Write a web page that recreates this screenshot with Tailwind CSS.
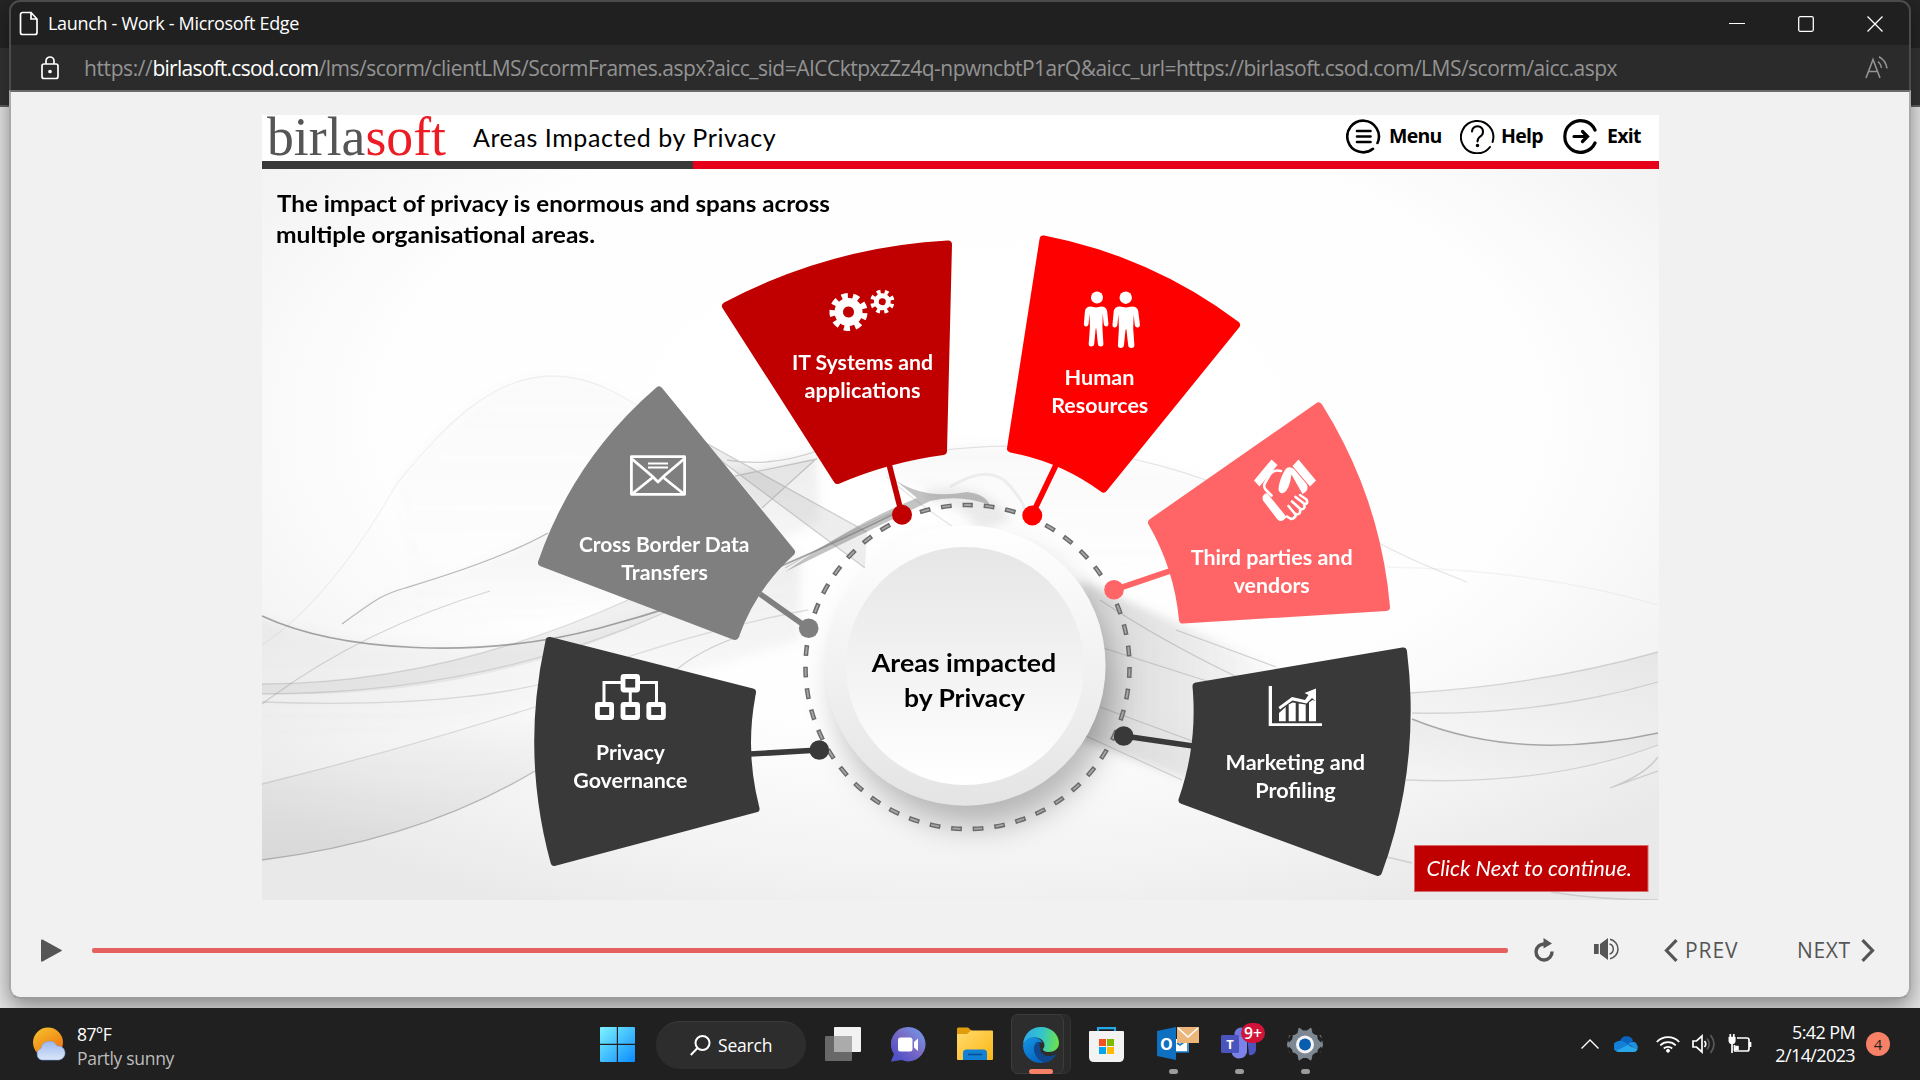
<!DOCTYPE html>
<html lang="en">
<head>
<meta charset="utf-8">
<title>Launch - Work - Microsoft Edge</title>
<script src="https://cdn.jsdelivr.net/npm/@tailwindcss/browser@4"></script>
</head>
<body class="w-[1920px] h-[1080px] overflow-hidden bg-[#e2e2e2] font-['Open_Sans',sans-serif]">
<div class="relative w-[1920px] h-[1080px] overflow-hidden">

  <!-- window behind -->
  <div class="absolute inset-0 flex flex-col">
    <div class="h-12 bg-[#242424]"></div>
    <div class="h-[57px] bg-[#333333]"></div>
    <div class="h-[2px] bg-[#5f5f5f]"></div>
    <div class="grow bg-[#e6e6e6]"></div>
  </div>

  <div class="relative flex flex-col h-[1080px]">
    <!-- popup window -->
    <main class="mx-[9px] h-[999px] flex flex-col rounded-[11px] shadow-[0_8px_22px_rgba(0,0,0,0.42)]">
      <header class="border-x-2 border-t-2 border-[#4b4b4b] rounded-t-[11px] bg-[#202020] overflow-hidden">
        <div class="h-[43px] flex items-center pl-[8px]">
          <svg class="w-[20px] h-[25px]" viewBox="0 0 20 25" fill="none" stroke="#fff" stroke-width="1.7"><path d="M3 1.5h9l6 6.5v13.500a2 2 0 0 1-2 2H3.500a2 2 0 0 1-2-2V3.500a2 2 0 0 1 2-2zM12 1.500V8h6"/></svg>
          <span class="ml-[9px] text-[18px] text-white tracking-[-0.32px] whitespace-nowrap">Launch - Work - Microsoft Edge</span>
          <div class="ml-auto mr-[26px] flex items-center gap-[53px]">
            <svg class="w-4 h-4" viewBox="0 0 16 16" stroke="#fff" stroke-width="1.2"><path d="M0 7.500h16"/></svg>
            <svg class="w-4 h-4" viewBox="0 0 16 16" stroke="#fff" stroke-width="1.3" fill="none"><rect x=".7" y=".7" width="14.600" height="14.600" rx="1.500"/></svg>
            <svg class="w-4 h-4" viewBox="0 0 16 16" stroke="#fff" stroke-width="1.300"><path d="M.5.5l15 15M15.500.5l-15 15"/></svg>
          </div>
        </div>
        <div class="h-[45px] bg-[#2b2b2b] flex items-center pl-[30px]">
          <svg class="w-[18px] h-[24px]" viewBox="0 0 18 24" fill="none" stroke="#fff" stroke-width="1.700"><rect x="1" y="8" width="16" height="14.500" rx="2"/><path d="M5 8V5a4 4 0 0 1 8 0v3"/><circle cx="9" cy="15.500" r="1" fill="#fff"/></svg>
          <div class="ml-[25px] flex text-[21px] text-[#939393] whitespace-nowrap leading-[26px]"><span class="tracking-[-0.4px]">https://</span><span class="text-white tracking-[-0.75px]">birlasoft.csod.com</span><span class="tracking-[-0.51px]">/lms/scorm/clientLMS/ScormFrames.aspx?aicc_sid=AICCktpxzZz4q-npwncbtP1arQ&amp;aicc_url=https://birlasoft.csod.com/LMS/scorm/aicc.aspx</span></div>
          <svg class="ml-auto mr-[21px] w-[23px] h-[23px]" viewBox="0 0 23 23" fill="none" stroke="#939393" stroke-width="1.600"><path d="M1 22L8 3.500 15 22M3.500 15.500h9M13 5.500q3 2.500 3.500 6.500M14 .8q7 4 8 11.500"/></svg>
        </div>
      </header>
      <section class="grow border-x-2 border-b-2 border-t-2 border-x-[#a9a9a9] border-b-[#9c9c9c] border-t-[#6b6b6b] rounded-b-[11px] bg-[#f1f1f1] flex flex-col pt-[23px] relative">
        <!-- slide -->
        <article class="ml-[251px] w-[1397px] h-[785px] bg-white flex flex-col">
          <div class="h-[46px] flex items-center">
            <svg class="w-[200px] h-[46px] overflow-visible" viewBox="262 115 200 46"><text x="267" y="155" font-family="Liberation Serif, serif" font-size="54" fill="#555" textLength="179" lengthAdjust="spacingAndGlyphs">birla<tspan fill="#ed1c24">soft</tspan></text></svg>
            <span class="ml-[11px] font-['Lato',sans-serif] text-[25px] text-black whitespace-nowrap tracking-[0.58px]">Areas Impacted by Privacy</span>
            <nav class="ml-auto pr-[17px] pb-[4px] flex items-center text-[19.5px] font-bold text-black leading-none tracking-[-0.7px]">
              <svg class="w-[35px] h-[35px]" viewBox="0 0 35 35" fill="none" stroke="#000" stroke-width="2.600" stroke-linecap="round"><path d="M31.500 24A15.800 15.800 0 1 0 27 29.800"/><path d="M11 12h13.500M11 17.500h13.500M11 23h13.500"/></svg>
              <span class="ml-[8px] w-[55px]">Menu</span>
              <svg class="ml-[16px] w-[35px] h-[35px]" viewBox="0 0 35 35" fill="none" stroke="#000" stroke-width="2" stroke-linecap="round"><path d="M32.600 23A16.200 16.200 0 1 0 30 28"/><path d="M12 12.500a5.500 5.500 0 1 1 8.500 4.800Q17.500 19.500 17.500 22.500"/><circle cx="17.500" cy="26.500" r=".8" fill="#000"/></svg>
              <span class="ml-[6px] w-[44px]">Help</span>
              <svg class="ml-[18px] w-[35px] h-[35px]" viewBox="0 0 35 35" fill="none" stroke="#000" stroke-width="3.200" stroke-linecap="round"><path d="M32 11A15.800 15.800 0 1 0 32 24"/><path d="M11 17.500h13.500M19.500 12.500l5 5-5 5"/></svg>
              <span class="ml-[9px] w-[35px]">Exit</span>
            </nav>
          </div>
          <div class="flex h-2"><div class="w-[431px] bg-[#393939]"></div><div class="grow bg-[#e60019]"></div></div>

          <svg class="w-[1397px] h-[731px] block" viewBox="262 169 1397 731" font-family="Lato, sans-serif">
            <defs>
              <radialGradient id="page" gradientUnits="userSpaceOnUse" cx="960" cy="420" r="1000" gradientTransform="translate(960 420) scale(1 .54) translate(-960 -420)">
                <stop offset="0" stop-color="#fff"/><stop offset=".58" stop-color="#fefefe"/><stop offset=".87" stop-color="#f1f1f1"/><stop offset="1.000" stop-color="#e9e9e9"/>
              </radialGradient>
              <linearGradient id="rim" x1="0" y1="0" x2="0" y2="1"><stop offset="0" stop-color="#fff"/><stop offset="1" stop-color="#e4e4e4"/></linearGradient>
              <linearGradient id="face" x1="0" y1="0" x2="0" y2="1"><stop offset="0" stop-color="#e6e6e6"/><stop offset="1" stop-color="#fff"/></linearGradient>
              <linearGradient id="fadeDown" x1="0" y1="0" x2="0" y2="1"><stop offset="0" stop-color="#888" stop-opacity=".15"/><stop offset="1" stop-color="#888" stop-opacity="0"/></linearGradient>
              <linearGradient id="fadeUp" x1="0" y1="1" x2="0" y2="0"><stop offset="0" stop-color="#888" stop-opacity=".22"/><stop offset="1" stop-color="#888" stop-opacity="0"/></linearGradient>
              <linearGradient id="fadeRight" x1="0" y1="0" x2="1" y2="0"><stop offset="0" stop-color="#777" stop-opacity=".3"/><stop offset="1" stop-color="#777" stop-opacity="0.03"/></linearGradient>
              <filter id="soft" x="-30%" y="-30%" width="160%" height="160%"><feGaussianBlur stdDeviation="16"/></filter>
              <filter id="silk" x="-10%" y="-10%" width="120%" height="120%"><feGaussianBlur stdDeviation="5"/></filter>
            </defs>
            <rect x="262" y="169" width="1397" height="731" fill="url(#page)"/>

            <!-- silk waves -->
            <g stroke="none" filter="url(#silk)">
              <path fill="url(#fadeDown)" opacity=".25" d="M396 485C440 430 490 376 552 376S650 420 722 460L700 560 420 620Z"/>
              <path fill="url(#fadeDown)" d="M342 624C380 596 385 594 405 588S500 560 548 533S680 480 816 453L820 520Q600 640 342 624Z"/>
              <path fill="url(#fadeDown)" opacity=".35" d="M820 455Q1000 425 1206 480L1180 570 1060 560 960 500Z"/>
              <path fill="url(#fadeDown)" d="M240 610C340 652 480 660 600 628S800 560 800 550V640Q560 720 240 740Z"/>
              <path fill="url(#fadeRight)" d="M1080 580L1276 667 1190 780 1080 740Z"/>
              <path fill="#888" fill-opacity=".16" d="M925 490Q990 480 1010 520L980 530Q960 505 925 500Z"/>
            </g>
            <g stroke="none">
              <path fill="url(#fadeUp)" opacity=".75" d="M262 784Q400 750 535 707L535 771Q420 840 262 860Z"/>
              <path fill="#888" fill-opacity=".12" d="M262 684Q440 684 628 600L664 613Q480 700 262 694Z"/>
              <path fill="#777" fill-opacity=".12" d="M706 443L867 532 865 568 720 460Z"/>
              <path fill="#777" fill-opacity=".08" d="M735 476L817 459 762 508Z"/>
              <path fill="url(#fadeDown)" opacity=".8" d="M1410 693Q1540 685 1658 652V733Q1520 763 1412 719Z"/>
              <path fill="url(#fadeDown)" opacity=".7" d="M1412 719Q1520 763 1658 733V745Q1550 786 1406 780Z"/>
              <path fill="#555" fill-opacity=".35" d="M895 480Q925 500 967 492Q985 494 990 505Q960 494 930 501Q860 535 785 572Q850 525 917 498Z"/>
            </g>
            <g fill="none" stroke="#777" stroke-width="1.300">
              <path stroke-opacity=".65" stroke-width="1.700" d="M262 616C340 652 480 660 600 628S800 560 900 511"/>
              <path stroke-opacity=".5" d="M342 624C380 596 385 594 405 588S500 560 548 533"/>
              <path stroke-opacity=".22" d="M262 684Q440 684 628 600M262 694Q480 694 664 613M262 702Q480 710 590 670T808 610"/>
              <path stroke-opacity=".28" d="M262 704Q360 630 490 591"/>
              <path stroke-opacity=".09" d="M262 645Q330 600 396 485C440 430 490 376 552 376S650 420 722 460"/>
              <path stroke-opacity=".22" d="M262 784Q400 750 535 707"/>
              <path stroke-opacity=".45" d="M262 860Q420 840 535 771"/>
              <path stroke-opacity=".32" d="M706 443L867 532M720 460L865 568M817 458L762 508M727 460Q770 468 820 450M735 476L817 459M785 568Q850 530 903 508M676 670Q700 650 740 636"/>
              <path stroke-opacity=".18" d="M930 452Q1070 432 1206 480M887 477Q960 540 1080 600"/>
              <path stroke-opacity=".1" stroke-width="3" d="M950 487Q990 462 1010 486T1022 512"/>
              <path stroke-opacity=".3" d="M1176 630L1276 667M1100 647L1210 682M1100 600Q1160 640 1235 676M1100 707L1195 742M1086 736L1182 780"/>
              <path stroke-opacity=".18" d="M1379 543Q1410 560 1467 582"/>
              <path stroke-opacity=".07" d="M1387 567Q1540 570 1658 605"/>
              <path stroke-opacity=".25" d="M1410 693Q1540 685 1658 652M1412 713Q1540 716 1658 682M1406 780Q1550 786 1658 745M1387 857L1412 863M1551 892Q1600 900 1658 900"/>
              <path stroke-opacity=".6" stroke-width="1.500" d="M1412 719Q1520 763 1658 733"/>
              <path stroke-opacity=".3" d="M1658 757Q1645 775 1610 788L1658 771"/>
            </g>

            <!-- hub -->
            <circle cx="975" cy="688" r="138" fill="#000" fill-opacity=".27" filter="url(#soft)"/>
            <circle cx="965.300" cy="665.500" r="140.300" fill="url(#rim)"/>
            <circle cx="965" cy="666" r="119" fill="url(#face)"/>
            <g fill="none" transform="rotate(-90 967.5 667)">
              <circle cx="967.500" cy="667" r="162" stroke="#6a6a6a" stroke-width="4.600" stroke-dasharray="10.8 10.857" stroke-dashoffset="5.400"/>
              <circle cx="967.500" cy="667" r="162" stroke="#a6a6a6" stroke-width="1.800" stroke-dasharray="8 13.657" stroke-dashoffset="4"/>
            </g>

            <!-- wedges and connectors -->
            <g stroke-width="8" stroke-linejoin="round">
              <path fill="#c00000" stroke="#c00000" d="M726 306A540 540 0 0 1 948 244.500L943 451A400 400 0 0 0 837.500 480Z"/>
              <path fill="#7f7f7f" stroke="#7f7f7f" d="M542 562.500A400 400 0 0 1 659 390.500L791 552A205 205 0 0 0 735 636Z"/>
              <path fill="#393939" stroke="#393939" d="M554.500 862A460 460 0 0 1 549.500 641L752 692.500A260 260 0 0 0 755.500 808.500Z"/>
              <path fill="#f00" stroke="#f00" d="M1043.500 239.500A470 470 0 0 1 1236 325L1103.500 488.500A225 225 0 0 0 1011 448.500Z"/>
              <path fill="#ff6566" stroke="#ff6566" d="M1318.500 406.500A450 450 0 0 1 1386 607L1183 619.500A240 240 0 0 0 1152 522.500Z"/>
              <path fill="#393939" stroke="#393939" d="M1403 651.500A475 475 0 0 1 1378 872L1182.500 800A270 270 0 0 0 1196.500 686.500Z"/>
            </g>
            <g stroke-width="5.600">
              <path stroke="#c00000" d="M889 464L902 515"/><circle cx="902" cy="514.700" r="10" fill="#c00000" stroke="none"/>
              <path stroke="#7f7f7f" d="M760 594L808 628"/><circle cx="808.700" cy="628.300" r="9.800" fill="#7f7f7f" stroke="none"/>
              <path stroke="#393939" d="M750 754L819 750"/><circle cx="819.300" cy="750" r="9.800" fill="#393939" stroke="none"/>
              <path stroke="#f00" d="M1056 465L1032 515"/><circle cx="1032.300" cy="515.500" r="10" fill="#f00" stroke="none"/>
              <path stroke="#ff6566" d="M1170 571L1114 590"/><circle cx="1114" cy="589.700" r="9.800" fill="#ff6566" stroke="none"/>
              <path stroke="#393939" d="M1193 746L1124 736"/><circle cx="1123.700" cy="736" r="9.800" fill="#393939" stroke="none"/>
            </g>

            <!-- gears -->
            <g fill="none" stroke="#fff">
              <g transform="rotate(4 848.5 312)"><circle cx="848.500" cy="312" r="9.800" stroke-width="8.500"/><circle cx="848.500" cy="312" r="15.800" stroke-width="6.500" stroke-dasharray="6 5.030"/></g>
              <g transform="rotate(12 882.3 301.7)"><circle cx="882.300" cy="301.700" r="6" stroke-width="5"/><circle cx="882.300" cy="301.700" r="9.800" stroke-width="4.600" stroke-dasharray="3.700 3.997"/></g>
            </g>
            <!-- envelope -->
            <g fill="none" stroke="#fff" stroke-width="2.800" stroke-linejoin="round"><rect x="631.400" y="456.700" width="53.200" height="37.600"/><path d="M632 459l20 17 6 6 6-6 20-17M632 494l20-16M684 494l-20-16"/><path stroke-width="2" d="M648 463.500h20M648 467.500h20"/></g>
            <!-- people -->
            <g fill="#fff">
              <circle cx="1097" cy="297.500" r="6"/><circle cx="1125.700" cy="297.700" r="6.200"/>
              <path d="M1091 306.500l5 1 5-1q5.500 0 6.200 5l1.200 12q0 3-2 3-2.400 0-2.700-3l-1-10-.3 14 1 16.500q0 2.500-2.700 2.500-2.600 0-2.800-2.500l-1.600-15.500h-.6l-1.500 15.500q-.3 2.500-2.900 2.500t-2.600-2.500l1.200-16.500-.3-14-1 10q-.3 3-2.600 3-2.200 0-2.100-3l1-12q.6-5 6.100-5z"/>
              <path transform="translate(0 -2)" d="M1120 308.500l6 1 6-1q5.600 0 6.300 5l1.600 13q0 3-2.300 3-2.500 0-2.900-3l-1-10-.5 14 1.200 16.800q0 2.700-3 2.700t-3.200-2.700l-1.800-15.800h-.8l-1.700 15.800q-.3 2.700-3.200 2.700t-2.800-2.700l1-16.800-.5-14-1 10q-.4 3-2.700 3-2.400 0-2.200-3l1.200-13q.7-5 6.300-5z"/>
            </g>
            <!-- handshake -->
            <g fill="#fff">
              <path d="M1271.500 459.500l6 5.500-18 21.500-5.500-6zM1298.500 459.500l17.500 21-6 6-17.500-20.500z"/>
              <path d="M1267 493l19.500 24q-5 6.500-9 2.500l-14.500-19q-2-5.500 4-7.500z"/>
              <path d="M1286 468.500q4-2.500 8 .5l13 15.500q2.500 6-4.500 9.500l-11-19.500q-2 15.500-8 18.500-4.500 1-5-4 1-11 7.500-20.500z"/>
              <path d="M1281 471q-8-2-12 5l-4.500 8q-1 3 1 5.500l6 6M1300 495l6.500 4.500q2 4.500-2 4.500l-9-7M1304 504q2 5-3 5.500l-9-8M1300 509.500q1 5.500-4.500 5l-7-8.500M1296 514q-.5 4.500-5 5l-4-2.500" fill="none" stroke="#fff" stroke-width="2.600" stroke-linecap="round" stroke-linejoin="round"/>
            </g>
            <!-- org chart -->
            <g fill="none" stroke="#fff"><g stroke-width="4.800"><rect x="623" y="676.500" width="14.600" height="13.500" rx="1"/><rect x="597.400" y="704.500" width="14.200" height="13" rx="1"/><rect x="623" y="704.500" width="14.600" height="13" rx="1"/><rect x="648.800" y="704.500" width="14.600" height="13" rx="1"/></g><path stroke-width="3" d="M622 682.500h-18V703M638.500 682.500H656.500V703M630.300 692V703"/></g>
            <!-- bar chart -->
            <g fill="#fff"><path d="M1268.700 686h3.300v37.300h50v2.700h-53.300z"/><path d="M1279 713l6.700-6v14.300H1279zM1288.700 704.500l4-2 3 .5v18.300h-7zM1298.700 703.500l7 1v16.800h-7zM1309 702.500l3.500-2.500 3.500 1v20.300h-7z"/><path d="M1316 688.500v13l-4-3.500-5.500 5.500-14-3-12.500 9-1.500-2.500L1292 697l13 3 3.500-5-4-2z"/></g>

            <!-- labels -->
            <g fill="#fff" font-size="21" font-weight="700" text-anchor="middle">
              <text x="862.500" y="370" textLength="141" lengthAdjust="spacingAndGlyphs">IT Systems and</text><text x="862.500" y="398" textLength="116" lengthAdjust="spacingAndGlyphs">applications</text>
              <text x="664.200" y="551.700" textLength="170.500" lengthAdjust="spacingAndGlyphs">Cross Border Data</text><text x="664.500" y="579.700" textLength="86.500" lengthAdjust="spacingAndGlyphs">Transfers</text>
              <text x="630.500" y="760" textLength="69" lengthAdjust="spacingAndGlyphs">Privacy</text><text x="630.300" y="788" textLength="114" lengthAdjust="spacingAndGlyphs">Governance</text>
              <text x="1099.500" y="384.700" textLength="70" lengthAdjust="spacingAndGlyphs">Human</text><text x="1099.800" y="412.700" textLength="97" lengthAdjust="spacingAndGlyphs">Resources</text>
              <text x="1271.700" y="564.700" textLength="162" lengthAdjust="spacingAndGlyphs">Third parties and</text><text x="1271.700" y="592.700" textLength="76" lengthAdjust="spacingAndGlyphs">vendors</text>
              <text x="1295.300" y="770" textLength="139.500" lengthAdjust="spacingAndGlyphs">Marketing and</text><text x="1295.500" y="798" textLength="80.500" lengthAdjust="spacingAndGlyphs">Profiling</text>
            </g>
            <g fill="#000" font-size="25" font-weight="700" text-anchor="middle"><text x="964" y="671.700" textLength="184.500" lengthAdjust="spacingAndGlyphs">Areas impacted</text><text x="964.500" y="706.700" textLength="121" lengthAdjust="spacingAndGlyphs">by Privacy</text></g>
            <g fill="#000" font-size="23" font-weight="700"><text x="277" y="211.700" textLength="553" lengthAdjust="spacingAndGlyphs">The impact of privacy is enormous and spans across</text><text x="276" y="242.500" textLength="319" lengthAdjust="spacingAndGlyphs">multiple organisational areas.</text></g>
            <rect x="1414.500" y="845.500" width="233.500" height="46" fill="#c00000" stroke="#d86a6a"/>
            <text x="1426.500" y="875.700" fill="#fff" font-size="21.500" font-style="italic" textLength="205.500" lengthAdjust="spacingAndGlyphs">Click Next to continue.</text>
          </svg>
        </article>

        <!-- player controls -->
        <div class="grow flex items-center pt-[3px] pl-[30px] pr-[34px] text-[#555]">
          <svg class="w-[21px] h-[23px]" viewBox="0 0 21 23" fill="#555"><path d="M0 1.500Q0 0 1.500.5L20.500 11q.8.5 0 1L1.500 22.500Q0 23 0 21.500z"/></svg>
          <div class="ml-[30px] w-[1416px] h-[5px] rounded-[2px] bg-[#e55f5f]"></div>
          <svg class="ml-[26px] w-[20px] h-[24px]" viewBox="0 0 20 24"><path d="M10.500 6A8 8 0 1 0 18 13.500" fill="none" stroke="#555" stroke-width="3.400"/><path d="M9.500 0l8.500 5.500-8.500 5z" fill="#555"/></svg>
          <svg class="ml-[40px] -mt-[2px] w-[25px] h-[22px]" viewBox="0 0 25 22" fill="#555"><path d="M0 6h4.700v10H0zM6 6l8-6v22l-8-6z"/><path d="M15.500 6a5.200 5.200 0 0 1 0 10M16 1.200a10 10 0 0 1 0 19.600" fill="none" stroke="#555" stroke-width="1.500"/></svg>
          <svg class="ml-[45px] w-[14px] h-[23px]" viewBox="0 0 14 23" fill="none" stroke="#555" stroke-width="3.200"><path d="M12.500 1.200L2.500 11.500l10 10.300"/></svg>
          <span class="ml-[7px] w-[55px] text-[21px] font-medium leading-none tracking-[0.9px]">PREV</span>
          <span class="ml-auto w-[55px] text-[21px] font-medium leading-none tracking-[0.6px]">NEXT</span>
          <svg class="ml-[9px] w-[14px] h-[23px]" viewBox="0 0 14 23" fill="none" stroke="#555" stroke-width="3.200"><path d="M1.500 1.200l10 10.300-10 10.300"/></svg>
        </div>
      </section>
    </main>

    <!-- taskbar -->
    <footer class="mt-[9px] h-[72px] bg-[#202020] flex items-center relative text-white">
      <svg class="ml-[32px] w-[35px] h-[34px]" viewBox="0 0 35 34"><defs><linearGradient id="sun" x1=".2" y1="0" x2=".8" y2="1"><stop stop-color="#f4bf2d"/><stop offset="1" stop-color="#f06a0a"/></linearGradient><linearGradient id="cloud" x1="0" y1="0" x2="0" y2="1"><stop stop-color="#9db9ee"/><stop offset="1" stop-color="#dbe7fa"/></linearGradient></defs><circle cx="16" cy="15.500" r="15" fill="url(#sun)"/><path d="M10 33a6 6 0 0 1-1-11.500 8.500 8.500 0 0 1 16-2.500A7 7 0 1 1 27 33z" fill="url(#cloud)" stroke="#7d9fe0" stroke-width=".6"/></svg>
      <div class="ml-[10px] pt-[3px] w-[120px] text-[17.5px] leading-[24px] tracking-[-0.6px] whitespace-nowrap"><div>87°F</div><div class="text-[#bdbdbd] tracking-[-0.3px]">Partly sunny</div></div>

      <div class="ml-[403px] flex items-center">
        <svg class="w-[35px] h-[35px]" viewBox="0 0 35 35"><defs><linearGradient id="win" x1="0" y1="0" x2="1" y2="1"><stop stop-color="#7df3ff"/><stop offset="1" stop-color="#0a8cff"/></linearGradient></defs><path fill="url(#win)" d="M1 0h15.800v16.800H0V1q0-1 1-1zM18 0h16q1 0 1 1v15.800H18zM0 18h16.800v17H1q-1 0-1-1zM18 18h17v16q0 1-1 1H18z"/></svg>
        <div class="ml-[21px] mt-[2px] w-[150px] h-[48px] rounded-full bg-[#2d2d2d] border-t border-[#3a3a3a] flex items-center pl-[34px]">
          <svg class="w-[21px] h-[21px]" viewBox="0 0 21 21" fill="none" stroke="#fff" stroke-width="2"><circle cx="12.500" cy="8" r="7"/><path d="M7.500 13L.8 20"/></svg>
          <span class="ml-[7px] text-[17.5px] tracking-[-0.2px]">Search</span>
        </div>
        <svg class="ml-[19px] w-[36px] h-[34px]" viewBox="0 0 36 34"><rect x="9" width="27" height="25" rx="1" fill="#f2f2f2"/><rect y="9" width="27" height="25" rx="1" fill="#686868"/><path d="M9 9h18v16H9z" fill="#ababab"/></svg>
        <svg class="ml-[30px] w-[35px] h-[35px]" viewBox="0 0 35 35"><defs><linearGradient id="chat" x1="1" y1=".1" x2=".2" y2=".9"><stop stop-color="#6f9bee"/><stop offset=".5" stop-color="#7b6cc4"/><stop offset="1" stop-color="#5252c8"/></linearGradient></defs><path fill="url(#chat)" d="M17.500 0a17.200 17.200 0 1 1-7 33L1 34.500q-1 0-.7-1L3 27A17.200 17.200 0 0 1 17.500 0z"/><rect x="7" y="10.500" width="14.500" height="14" rx="2.500" fill="#fff"/><path d="M23 15l4-3.500V24l-4-3.500z" fill="#fff"/></svg>
        <svg class="ml-[31px] w-[36px] h-[34px]" viewBox="0 0 36 34"><defs><linearGradient id="fold" x1="0" y1="0" x2="1" y2="1"><stop stop-color="#ffdb6e"/><stop offset="1" stop-color="#fcb614"/></linearGradient></defs><path fill="#e19c0b" d="M1 .5h10l4 3.500H30v8H0V1.500z"/><path fill="url(#fold)" d="M0 7h10l4-3.500h21q1 0 1 1V32q0 1-1 1H1q-1 0-1-1z"/><path fill="#1180d5" d="M6 33V26q0-3.500 3.500-3.500h17Q30 22.500 30 26v7z"/><path stroke="#084f91" stroke-width="1.600" d="M11 27.500h14"/></svg>
        <div class="ml-[18px] w-[60px] h-[60px] rounded-[7px] bg-[#292929] border border-[#333]">
          <div class="w-[53px] h-[60px] -ml-px -mt-px rounded-[7px] bg-[#2d2d2d] border border-[#3c3c3c] flex flex-col items-center pt-[12px]">
            <svg class="ml-[6px] w-[36px] h-[36px] shrink-0" viewBox="0 0 36 36"><defs><linearGradient id="e1" x1="0" y1=".3" x2="1" y2=".4"><stop stop-color="#2fa9e6"/><stop offset=".5" stop-color="#31c4cf"/><stop offset="1" stop-color="#6be24c"/></linearGradient><linearGradient id="e2" x1="0" y1="0" x2=".6" y2="1"><stop stop-color="#1697e4"/><stop offset="1" stop-color="#0565c0"/></linearGradient></defs><path fill="url(#e1)" d="M0 17C1 7 8 0 18 0c11 0 18 8 18 16 0 6-5 9-10 9-4 0-6.500-1.500-6-3 2-2 2-5 0-8C16 9 6 9 0 17z"/><path fill="url(#e2)" d="M0 18C2 11 9 9 14 11c3 1.200 5 3 5.500 5-5-3-9 2-8 8 1 5.500 5 9 10 11.500C9 38 0 29 0 18z"/><path fill="#10488f" d="M14 15c-4 3-4 10 0 15 3 4 7 5.500 9 5.500 5-1 9-5 10.500-8.500-9 5-17 0-16-5-1-2-1.500-4-.5-6.500z"/></svg>
            <div class="ml-[6px] mt-[6px] w-[24px] h-[5px] shrink-0 rounded-full bg-[#f78166]"></div>
          </div>
        </div>
        <svg class="ml-[18px] w-[35px] h-[35px]" viewBox="0 0 35 35"><path d="M9 6V1.200h17V6" fill="none" stroke="#25a7e8" stroke-width="2.200"/><path fill="#f3f3f3" d="M0 5q0-1 1-1h33q1 0 1 1v25q0 5-5 5H5q-5 0-5-5z"/><path fill="#f25022" d="M10 12h7v7h-7z"/><path fill="#7fba00" d="M18 12h7v7h-7z"/><path fill="#00a4ef" d="M10 20h7v7h-7z"/><path fill="#ffb900" d="M18 20h7v7h-7z"/></svg>
        <div class="ml-[33px] w-[42px] h-[60px] flex flex-col items-center pt-[13px]">
          <svg class="w-[42px] h-[34px] shrink-0" viewBox="0 0 42 34" font-family="Open Sans, sans-serif"><path fill="#fff" d="M14 12h18v13H14z"/><path fill="none" stroke="#1278c9" stroke-width="1.600" d="M14 25h17V15M20 16l3 2 4-3"/><path fill="#0f6fc0" d="M0 4l19-4v33L0 29z"/><text x="3" y="22.500" font-size="16" font-weight="700" fill="#fff">O</text><path fill="#ecb57a" d="M20 0h22v16H20z"/><path fill="none" stroke="#fff" stroke-width="1.500" d="M21 1l10 9 10-9"/></svg>
          <div class="mt-[8px] -ml-[9px] w-[9px] h-[5px] shrink-0 rounded-full bg-[#9b9b9b]"></div>
        </div>
        <div class="ml-[22px] w-[44px] h-[60px] pt-[9px]">
          <svg class="w-[44px] h-[38px] block" viewBox="0 0 44 38" font-family="Open Sans, sans-serif"><path fill="#4d55bd" d="M26 13h9v14q-1 6-7 5z"/><circle cx="20" cy="11" r="6.500" fill="#6f78dc"/><path fill="#7b83eb" d="M11 14h15v15a8 8 0 0 1-15 2z"/><rect y="12" width="18" height="18" rx="1.500" fill="#4b53bc"/><text x="9" y="26" font-size="13" font-weight="700" fill="#fff" text-anchor="middle">T</text><rect x="20" width="24" height="20" rx="10" fill="#d1133a"/><text x="32" y="15.500" font-size="15.500" font-weight="600" fill="#fff" text-anchor="middle" textLength="18" lengthAdjust="spacingAndGlyphs">9+</text></svg>
          <div class="mt-[8px] ml-[14px] w-[9px] h-[5px] rounded-full bg-[#9b9b9b]"></div>
        </div>
        <div class="ml-[22px] w-[36px] h-[60px] flex flex-col items-center pt-[13px]">
          <svg class="w-[36px] h-[35px] shrink-0" viewBox="0 0 36 35"><path d="M11.500 1.500q.3-1 1.300-.6l3.200 2.600h4l3.200-2.600q1-.4 1.300.6l1 4.500 3 2 4.500 0q1 0 1.200.9L35.800 16.500q.4 1 0 2L34 25q-.4 1-1.300.8h-4.200l-3 2.200-1 4.700q-.3 1-1.300.6L20 31h-4l-3.200 2.300q-1 .4-1.300-.6l-1-4.700-3-2.200H3.300Q2.400 26 2 25L.2 18.500q-.4-1 0-2L2 9q.4-1 1.300-1h4.200l3-2z" fill="#7c8791"/><circle cx="18" cy="17.500" r="9" fill="#f4f4f4"/><circle cx="18" cy="17.500" r="6" fill="#0a5cae"/><path d="M.5 12.500l3.500-5 2 1-1 4-3 3zM35.500 12.500l-3.500-5-2 1 1 4 3 3zM.5 22.500l3.500 5 2-1-1-4-3-3zM35.500 22.500l-3.500 5-2-1 1-4 3-3z" fill="#202020"/></svg>
          <div class="mt-[7px] w-[9px] h-[5px] shrink-0 rounded-full bg-[#9b9b9b]"></div>
        </div>
      </div>

      <div class="ml-auto pr-[30px] flex items-center">
        <svg class="w-[18px] h-[10px]" viewBox="0 0 18 10" fill="none" stroke="#fff" stroke-width="1.400"><path d="M.5 9.500L9 1l8.500 8.500"/></svg>
        <svg class="ml-[15px] w-[24px] h-[16px]" viewBox="0 0 24 16"><path fill="#0a64bd" d="M6 5a7 7 0 0 1 13-.5L14 10z"/><path fill="#1380d8" d="M4 15.500A5 5 0 0 1 2 6Q7 3 12 7l4 3-6 5z"/><path fill="#1b8fe0" d="M14 8q5-4 8-1 3 4 1 7z"/><path fill="#28a8ea" d="M2 15l12-6 9.500 4.500Q22 16 20 16H5q-2 0-3-1z"/></svg>
        <svg class="ml-[18px] w-[24px] h-[18px]" viewBox="0 0 24 18" fill="none" stroke="#fff" stroke-width="1.800"><path d="M.8 7a15.500 15.500 0 0 1 22.400 0M4.300 10.300a10.800 10.800 0 0 1 15.400 0M7.800 13.500a6 6 0 0 1 8.400 0"/><circle cx="12" cy="15.700" r="1.500" fill="#fff" stroke-width="1"/></svg>
        <svg class="ml-[12px] w-[24px] h-[20px]" viewBox="0 0 24 20" fill="none" stroke="#fff" stroke-width="1.700"><path d="M1 7h3.500L10 2v16l-5.500-5H1zM12.500 7q2.500 3 0 6"/><path stroke="#5a5a5a" d="M15 4.500q4.500 5.500 0 11M18.500 1q7 9 0 18"/></svg>
        <svg class="ml-[12px] w-[24px] h-[20px]" viewBox="0 0 24 20" fill="none" stroke="#fff" stroke-width="1.700"><path d="M9 4h10q2 0 2 2v9q0 2-2 2H6M22.500 8v5M4 9v10M6.500 17V11"/><path fill="#fff" d="M.8 3h6.500v4q0 3-3.200 3T.8 7zM7.500 12h3v4h-4z" stroke-width=".5"/><path d="M2.300 0v3M5.800 0v3"/></svg>
        <div class="ml-[22px] w-[81px] text-right text-[18px] leading-[23.5px] tracking-[-0.62px] whitespace-nowrap"><div>5:42 PM</div><div>2/14/2023</div></div>
        <div class="ml-[11px] w-6 h-6 rounded-full bg-[#f78166] text-[#222] text-[15px] flex items-center justify-center leading-none">4</div>
      </div>
    </footer>
  </div>
</div>
</body>
</html>
